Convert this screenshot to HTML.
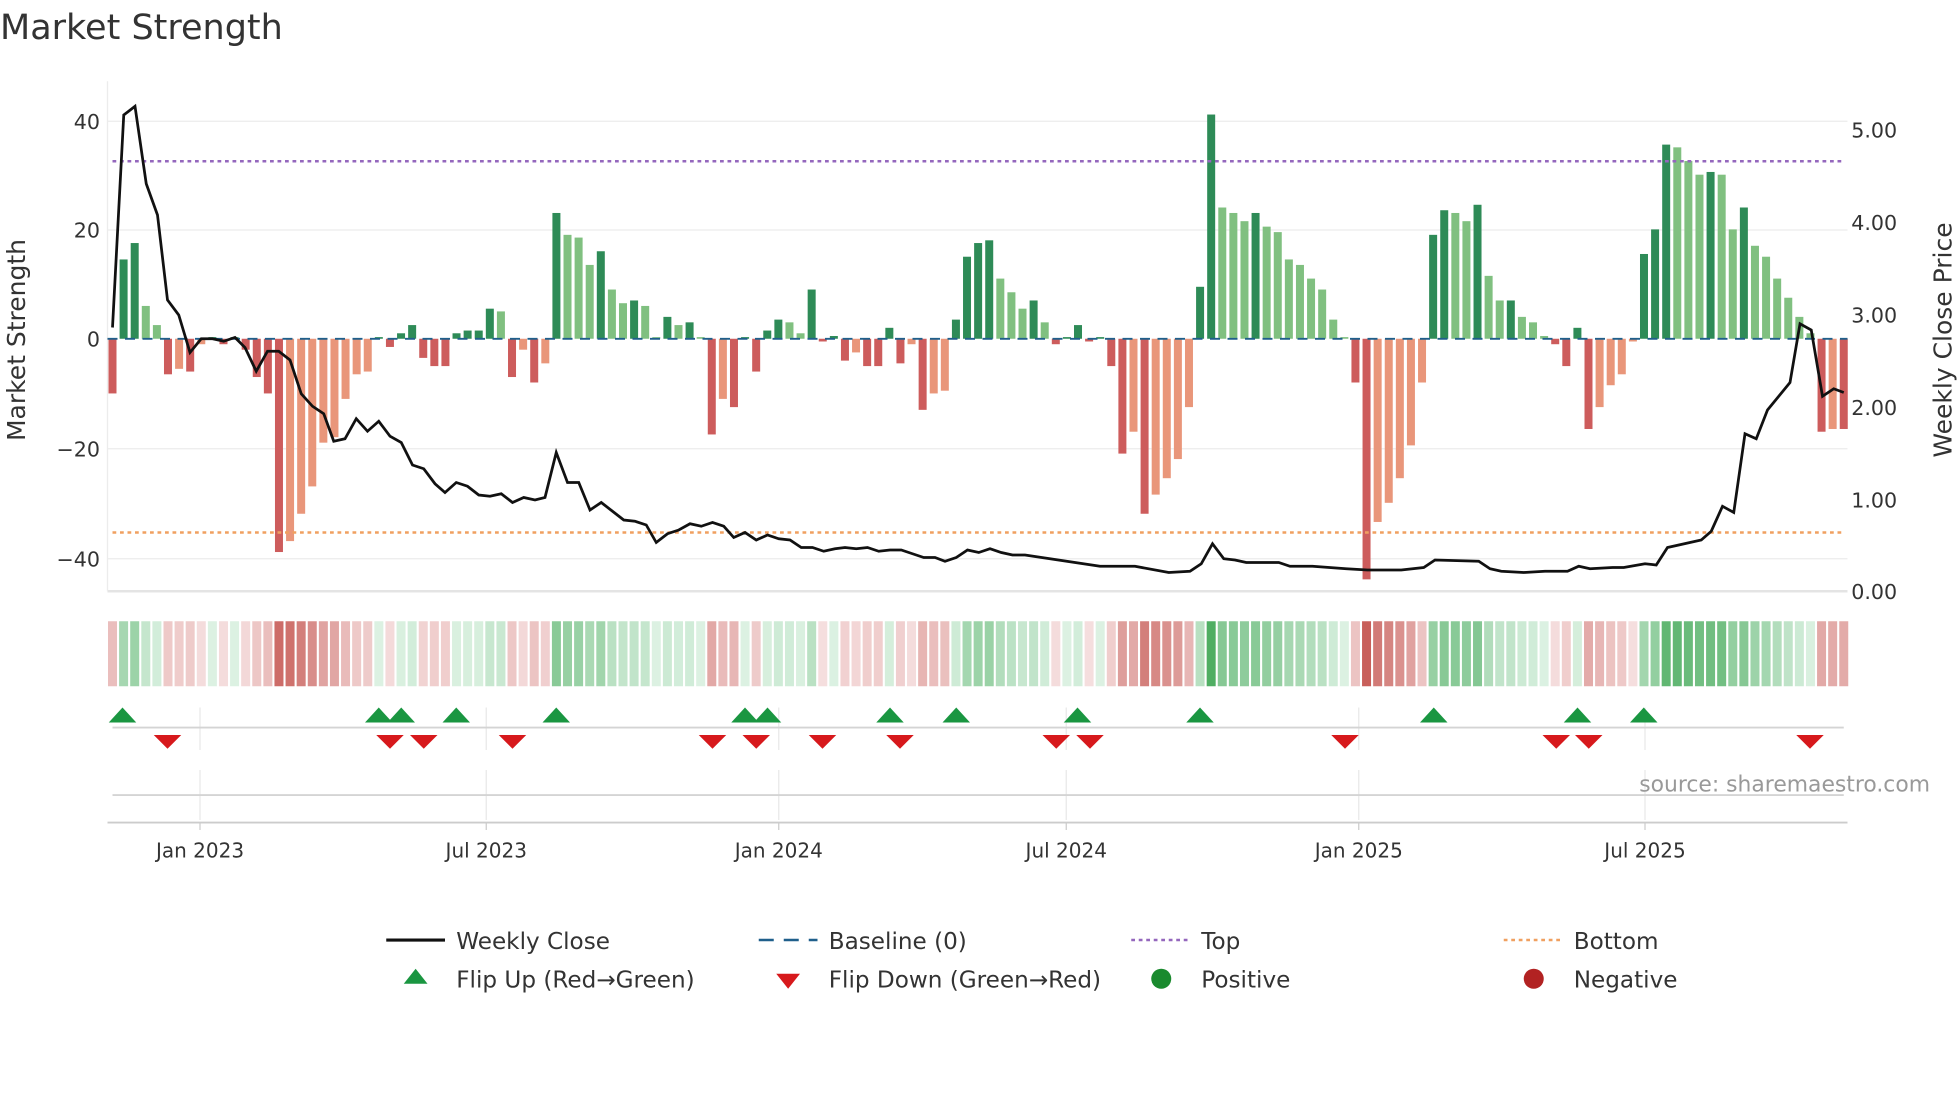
<!DOCTYPE html>
<html><head><meta charset="utf-8"><style>
html,body{margin:0;padding:0;background:#fff;overflow:hidden}
svg{display:block}
text{font-family:"DejaVu Sans","Liberation Sans",sans-serif;fill:#333}
</style></head><body>
<svg id="s" width="1960" height="1102" viewBox="0 0 1568 881.6" xmlns="http://www.w3.org/2000/svg">
<rect width="1568" height="882" fill="#fff"/>
<text x="0" y="31" font-size="28" fill="#333">Market Strength</text>
<g stroke="#ececec" stroke-width="1">
<line x1="86" x2="1478" y1="97" y2="97"/><line x1="86" x2="1478" y1="184" y2="184"/>
<line x1="86" x2="1478" y1="359" y2="359"/><line x1="86" x2="1478" y1="447" y2="447"/>
<line x1="86" x2="1478" y1="473" y2="473" stroke="#e4e4e4" stroke-width="2"/>
<line x1="86" x2="86" y1="65" y2="473"/>
</g>
<g font-size="16.5" text-anchor="end">
<text x="80" y="103">40</text><text x="80" y="190">20</text><text x="80" y="277">0</text>
<text x="80" y="365">−20</text><text x="80" y="453">−40</text>
</g>
<g font-size="16.5">
<text x="1481" y="110">5.00</text><text x="1481" y="184">4.00</text><text x="1481" y="258">3.00</text>
<text x="1481" y="332">2.00</text><text x="1481" y="406">1.00</text><text x="1481" y="479">0.00</text>
</g>
<text transform="translate(20,272) rotate(-90)" font-size="20" text-anchor="middle">Market Strength</text>
<text transform="translate(1561,272) rotate(-90)" font-size="20" text-anchor="middle">Weekly Close Price</text>
<g id="bars"></g>
<line x1="86" x2="1478" y1="271" y2="271" stroke="#1f5f8b" stroke-width="1.5" stroke-dasharray="8,6"/>
<line x1="90" x2="1476" y1="129" y2="129" stroke="#9467bd" stroke-width="2" stroke-dasharray="3,3"/>
<line x1="90" x2="1476" y1="426" y2="426" stroke="#f0a060" stroke-width="2" stroke-dasharray="3,3"/>
<polyline fill="none" stroke="#111" stroke-width="2.2" points="90,262 99,92 108,85 117,147 126,172 134,240 143,252 152,282 161,271 170,271 179,273 188,270 196,278 205,297 214,281 223,281 232,288 241,315 250,325 259,331 267,353 276,351 285,335 294,345 303,337 312,349 321,354 330,372 339,375 348,387 356,394 365,386 374,389 383,396 392,397 401,395 410,402 419,398 428,400 436,398 445,362 454,386 463,386 472,408 481,402 490,409 499,416 508,417 517,420 525,434 534,427 543,424 552,419 561,421 570,418 579,421 587,430 596,426 605,432 614,428 623,431 632,432 641,438 650,438 659,441 668,439 676,438 685,439 694,438 703,441 712,440 721,440 730,443 739,446 748,446 756,449 765,446 774,440 783,442 792,439 801,442 810,444 820,444 840,447 860,450 880,453 908,453 935,458 952,457 961,451 970,435 979,447 988,448 997,450 1023,450 1032,453 1050,453 1077,455 1094,456 1121,456 1139,454 1148,448 1183,449 1192,455 1201,457 1219,458 1236,457 1254,457 1263,453 1272,455 1290,454 1299,454 1316,451 1325,452 1334,438 1343,436 1361,432 1369,425 1378,405 1387,410 1396,347 1405,351 1414,328 1423,317 1432,306 1440,259 1449,264 1458,317 1467,311 1475,314"/>
<g id="heat"></g>
<g stroke="#e8e8e8" stroke-width="1">
<line x1="160" x2="160" y1="566" y2="600"/><line x1="389" x2="389" y1="566" y2="600"/><line x1="623" x2="623" y1="566" y2="600"/><line x1="853" x2="853" y1="566" y2="600"/><line x1="1087" x2="1087" y1="566" y2="600"/><line x1="1316" x2="1316" y1="566" y2="600"/>
<line x1="160" x2="160" y1="616" y2="656"/><line x1="389" x2="389" y1="616" y2="656"/><line x1="623" x2="623" y1="616" y2="656"/><line x1="853" x2="853" y1="616" y2="656"/><line x1="1087" x2="1087" y1="616" y2="656"/><line x1="1316" x2="1316" y1="616" y2="656"/>
</g>
<line x1="90" x2="1475" y1="582" y2="582" stroke="#d4d4d4" stroke-width="1.5"/>
<line x1="90" x2="1475" y1="636" y2="636" stroke="#d4d4d4" stroke-width="1.5"/>
<line x1="86" x2="1478" y1="658" y2="658" stroke="#ccc" stroke-width="1.5"/>
<g id="tri"></g>
<text x="1544" y="633" font-size="17.5" text-anchor="end" fill="#999" style="fill:#999">source: sharemaestro.com</text>
<g stroke="#ccc"><line x1="160" x2="160" y1="658" y2="664"/><line x1="389" x2="389" y1="658" y2="664"/><line x1="623" x2="623" y1="658" y2="664"/><line x1="853" x2="853" y1="658" y2="664"/><line x1="1087" x2="1087" y1="658" y2="664"/><line x1="1316" x2="1316" y1="658" y2="664"/></g>
<g font-size="16" text-anchor="middle">
<text x="160" y="686">Jan 2023</text><text x="389" y="686">Jul 2023</text><text x="623" y="686">Jan 2024</text><text x="853" y="686">Jul 2024</text><text x="1087" y="686">Jan 2025</text><text x="1316" y="686">Jul 2025</text>
</g>
<g font-size="18.5">
<line x1="309" x2="356" y1="752" y2="752" stroke="#111" stroke-width="2.5"/><text x="365" y="759">Weekly Close</text>
<polygon points="323,787 342,787 332.5,775" fill="#1a9641"/><text x="365" y="790">Flip Up (Red→Green)</text>
<line x1="607" x2="654" y1="752" y2="752" stroke="#1f5f8b" stroke-width="2" stroke-dasharray="12,8"/><text x="663" y="759">Baseline (0)</text>
<polygon points="621,779 640,779 630.5,791" fill="#d7191c"/><text x="663" y="790">Flip Down (Green→Red)</text>
<line x1="905" x2="952" y1="752" y2="752" stroke="#9467bd" stroke-width="2" stroke-dasharray="3,3"/><text x="961" y="759">Top</text>
<circle cx="929" cy="783" r="8" fill="#1a8a2e"/><text x="961" y="790">Positive</text>
<line x1="1203" x2="1250" y1="752" y2="752" stroke="#f0a060" stroke-width="2" stroke-dasharray="3,3"/><text x="1259" y="759">Bottom</text>
<circle cx="1227" cy="783" r="8" fill="#b22222"/><text x="1259" y="790">Negative</text>
</g>
</svg>
<script>
var v=[-10,14.5,17.5,6,2.5,-6.5,-5.5,-6,-1,0.3,-1,0.3,-2,-7,-10,-39,-37,-32,-27,-19,-18,-11,-6.5,-6,0.3,-1.5,1,2.5,-3.5,-5,-5,1,1.5,1.5,5.5,5,-7,-2,-8,-4.5,23,19,18.5,13.5,16,9,6.5,7,6,0.3,4,2.5,3,0.3,-17.5,-11,-12.5,0.3,-6,1.5,3.5,3,1,9,-0.5,0.5,-4,-2.5,-5,-5,2,-4.5,-1,-13,-10,-9.5,3.5,15,17.5,18,11,8.5,5.5,7,3,-1,0.3,2.5,-0.5,0.3,-5,-21,-17,-32,-28.5,-25.5,-22,-12.5,9.5,41,24,23,21.5,23,20.5,19.5,14.5,13.5,11,9,3.5,0.3,-8,-44,-33.5,-30,-25.5,-19.5,-8,19,23.5,23,21.5,24.5,11.5,7,7,4,3,0.5,-1,-5,2,-16.5,-12.5,-8.5,-6.5,-0.5,15.5,20,35.5,35,32.5,30,30.5,30,20,24,17,15,11,7.5,4,1,-17,-16.5,-16.5];
var N=v.length,x0=90,dx=(1475-90)/(N-1),ns="http://www.w3.org/2000/svg";
function el(g,t,a){var e=document.createElementNS(ns,t);for(var k in a)e.setAttribute(k,a[k]);document.getElementById(g).appendChild(e);}
function mix(a,b,t){return "rgb("+a.map(function(c,i){return Math.round(c+(b[i]-c)*t)}).join(",")+")";}
for(var i=0;i<N;i++){var x=x0+i*dx,y=v[i],p=i?v[i-1]:0,c;
 var dark=Math.abs(y)>=Math.abs(p)||(y*p<=0);
 if(y>=0)c=dark?"#2e8b57":"#80c080";else c=dark?"#cd5c5c":"#e9967a";
 var h=Math.abs(y)*4.375;el("bars","rect",{x:x-3.2,y:y>=0?271-h:271,width:6.4,height:Math.max(h,1),fill:c});
 var t=Math.min(Math.abs(y)/44,1),hc;
 if(y>=0)hc=mix([222,242,228],[70,170,90],Math.pow(t,0.9));else hc=mix([246,224,224],[200,95,90],Math.pow(t,0.9));
 el("heat","rect",{x:x-3.6,y:497,width:7.2,height:52,fill:hc});}
[98,303,321,365,445,596,614,712,765,862,960,1147,1262,1315].forEach(function(x){el("tri","polygon",{points:(x-11)+",578 "+(x+11)+",578 "+x+",566",fill:"#1a9641"});});
[134,312,339,410,570,605,658,720,845,872,1076,1245,1271,1448].forEach(function(x){el("tri","polygon",{points:(x-11)+",588 "+(x+11)+",588 "+x+",599",fill:"#d7191c"});});
</script>
</body></html>
